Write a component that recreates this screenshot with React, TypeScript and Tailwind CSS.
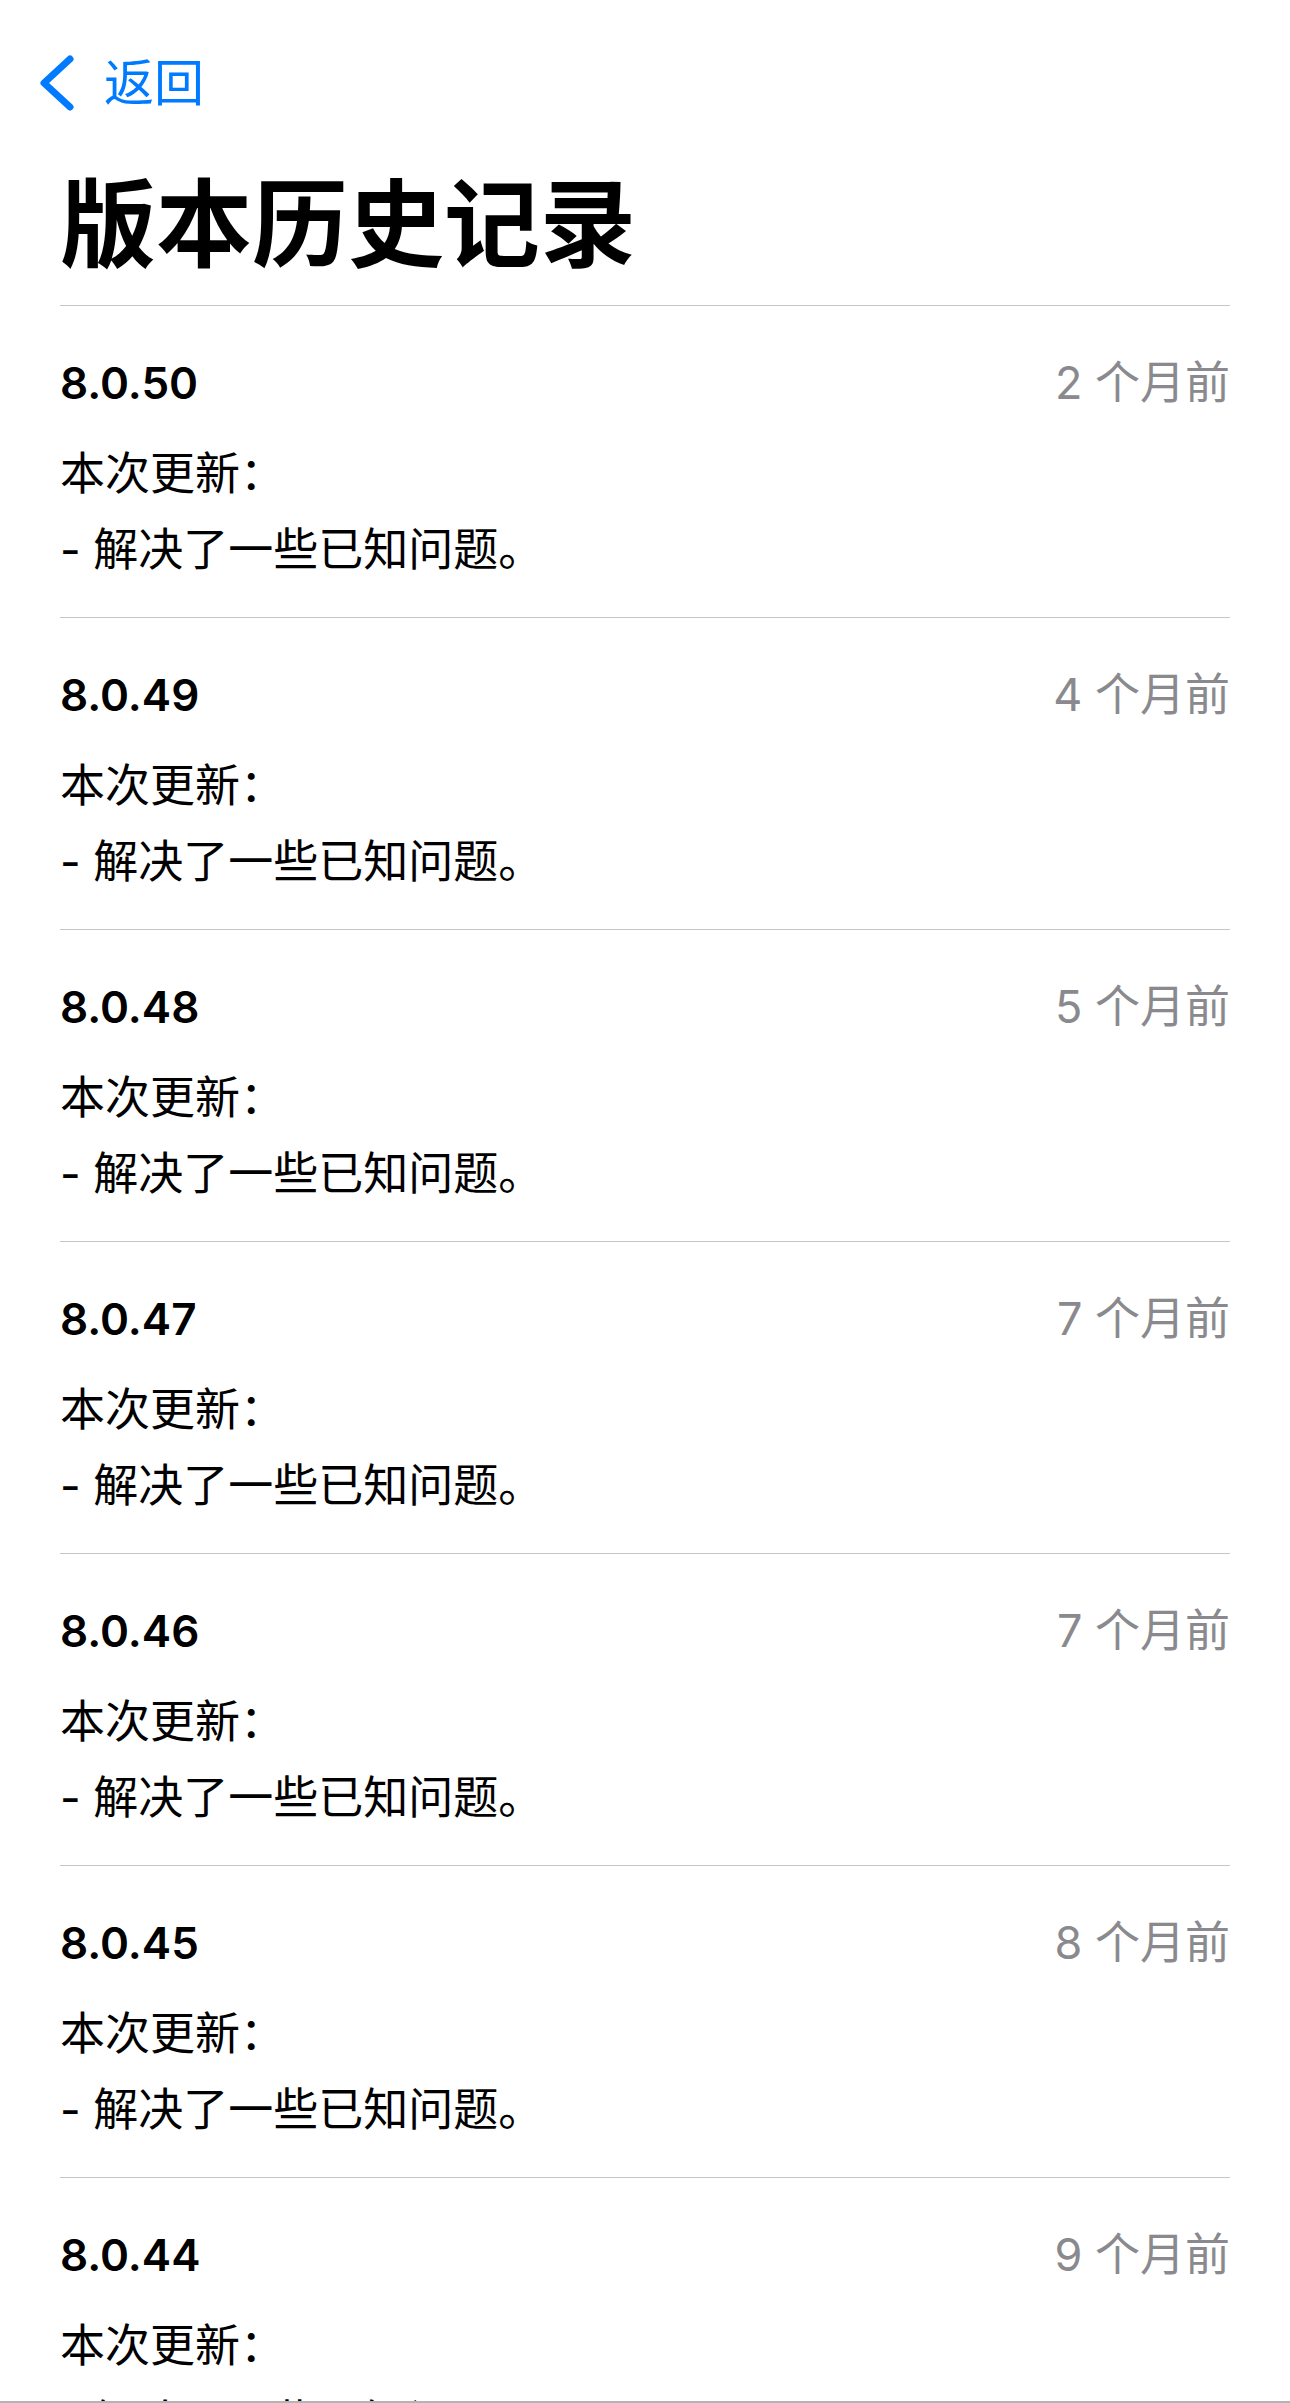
import React from 'react'

interface Version {
  version: string
  date: string
  notes: string[]
}

const versions: Version[] = [
  { version: '8.0.50', date: '2 个月前', notes: ['本次更新：', '- 解决了一些已知问题。'] },
  { version: '8.0.49', date: '4 个月前', notes: ['本次更新：', '- 解决了一些已知问题。'] },
  { version: '8.0.48', date: '5 个月前', notes: ['本次更新：', '- 解决了一些已知问题。'] },
  { version: '8.0.47', date: '7 个月前', notes: ['本次更新：', '- 解决了一些已知问题。'] },
  { version: '8.0.46', date: '7 个月前', notes: ['本次更新：', '- 解决了一些已知问题。'] },
  { version: '8.0.45', date: '8 个月前', notes: ['本次更新：', '- 解决了一些已知问题。'] },
  { version: '8.0.44', date: '9 个月前', notes: ['本次更新：', '- 解决了一些已知问题。'] },
]

export default function App() {
  return (
    <div
      className="relative h-[2403px] w-[1290px] overflow-hidden bg-white text-black"
      style={{ fontFamily: '"Inter", "Noto Sans CJK SC", sans-serif' }}
    >
      {/* Nav bar */}
      <div className="mt-[53px] flex h-[60px] items-center pl-[38px] text-[#007aff]">
        <svg width="38" height="58" viewBox="0 0 38 58" fill="none" className="shrink-0">
          <path
            d="M32 5 L6 29 L32 53"
            stroke="currentColor"
            strokeWidth="7"
            strokeLinecap="round"
            strokeLinejoin="round"
          />
        </svg>
        <span className="ml-[28px] text-[50px] leading-none">返回</span>
      </div>

      {/* Title */}
      <h1 className="mt-[50px] px-[60px] text-[96px] font-bold leading-[122px]">版本历史记录</h1>

      {/* Version list */}
      <div className="mx-[60px] mt-[20px]">
        {versions.map((v) => (
          <div key={v.version} className="border-t border-[#c6c6c8] pt-[47px] pb-[29px]">
            <div className="flex h-[60px] items-center justify-between">
              <span className="text-[44px] font-semibold">{v.version}</span>
              <span className="text-[45px] text-[#8a8a8e]">{v.date}</span>
            </div>
            <div className="mt-[23px] text-[45px] leading-[76px]">
              {v.notes.map((line) => (
                <p key={line}>{line}</p>
              ))}
            </div>
          </div>
        ))}
      </div>

      {/* Bottom bar edge */}
      <div className="absolute bottom-0 left-0 h-[2px] w-full bg-[#b4b4b4]" />
    </div>
  )
}
